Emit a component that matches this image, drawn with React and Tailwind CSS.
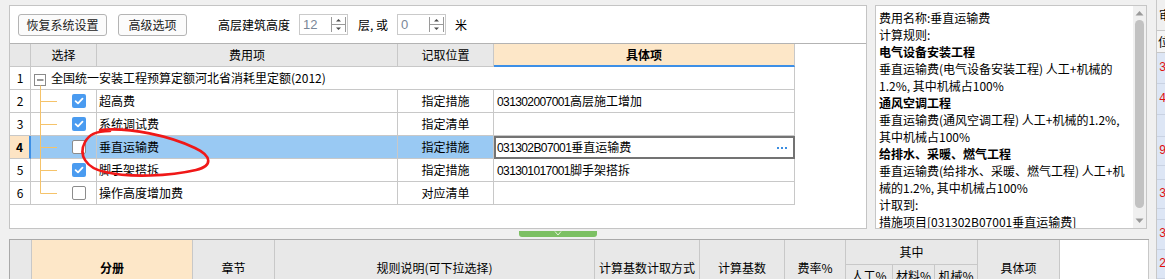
import React from "react";

function Check({ checked }) {
  if (checked) {
    return (
      <span className="w-[14px] h-[14px] rounded-[2px] bg-[#4a9bf0] flex items-center justify-center shrink-0">
        <svg width="10" height="10" viewBox="0 0 10 10">
          <path d="M1.6 5.2 L4 7.4 L8.5 2.7" stroke="#ffffff" strokeWidth="1.8" fill="none" strokeLinecap="round" strokeLinejoin="round" />
        </svg>
      </span>
    );
  }
  return <span className="block w-[14px] h-[14px] rounded-[2px] bg-white border border-[#8c8c8c] shrink-0" />;
}

function Spin({ value }) {
  return (
    <div className="w-[49px] h-[21px] border border-[#cacaca] bg-white flex items-center justify-between pl-[3px] pr-[1px]">
      <span className="text-[#7a8797] text-[13px] leading-none font-['Liberation_Sans',sans-serif]">{value}</span>
      <svg width="15" height="17" viewBox="0 0 15 17">
        <path d="M0.5 1 V16 M14.5 1 V16 M0.5 8.5 H14.5" stroke="#9a9a9a" strokeWidth="1" fill="none" />
        <path d="M5 5.5 L7.5 3 L10 5.5 Z" fill="#4a4a4a" />
        <path d="M5 11.5 L7.5 14 L10 11.5 Z" fill="#4a4a4a" />
      </svg>
    </div>
  );
}

function Connector({ last }) {
  return (
    <svg width="27" height="23" viewBox="0 0 27 23" className="shrink-0 block">
      <path d={last ? "M9.5 0 V11.5" : "M9.5 0 V23"} stroke="#f5c36a" strokeWidth="1" fill="none" />
      <path d="M9.5 11.5 H26" stroke="#f5c36a" strokeWidth="1" fill="none" />
    </svg>
  );
}

const rows = [
  { n: 2, checked: true, name: "超高费", loc: "指定措施", code: "031302007001", item: "高层施工增加" },
  { n: 3, checked: true, name: "系统调试费", loc: "指定清单" },
  { n: 4, checked: false, name: "垂直运输费", loc: "指定措施", code: "031302B07001", item: "垂直运输费", selected: true },
  { n: 5, checked: true, name: "脚手架搭拆", loc: "指定措施", code: "031301017001", item: "脚手架搭拆" },
  { n: 6, checked: false, name: "操作高度增加费", loc: "对应清单", last: true },
];

function Toolbar() {
  return (
    <div className="h-[38px] border-b border-[#b3b3b3] flex items-center pl-[8px] shrink-0">
      <button className="w-[89px] h-[22px] border border-[#b4b4b4] rounded-[3px] bg-[#fbfbfb] text-[12px] leading-none text-[#222]">恢复系统设置</button>
      <button className="ml-[11px] w-[69px] h-[22px] border border-[#b4b4b4] rounded-[3px] bg-[#fbfbfb] text-[12px] leading-none text-[#222]">高级选项</button>
      <span className="ml-[31px] text-[12px] leading-none">高层建筑高度</span>
      <div className="ml-[9px]"><Spin value="12" /></div>
      <span className="ml-[10px] text-[12px] leading-none">层, 或</span>
      <div className="ml-[9px]"><Spin value="0" /></div>
      <span className="ml-[9px] text-[12px] leading-none">米</span>
    </div>
  );
}

function MainTable() {
  const cell = "h-[23px] border-r border-b border-[#c8c8c8] flex items-center text-[12px] leading-none";
  return (
    <div className="grid grid-cols-[21px_66px_301px_96px_301px] w-fit">
      <div className={cell + " bg-[#e8e8e8]"} />
      <div className={cell + " bg-[#e8e8e8] justify-center"}>选择</div>
      <div className={cell + " bg-[#e8e8e8] justify-center"}>费用项</div>
      <div className={cell + " bg-[#e8e8e8] justify-center"}>记取位置</div>
      <div className="h-[23px] border-r border-b-2 border-r-[#c8c8c8] border-b-[#3d8fe6] bg-[#fde7c8] flex items-center justify-center text-[12px] leading-none font-bold">具体项</div>

      <div className={cell + " justify-center bg-white"}>1</div>
      <div className={cell + " col-span-4 bg-white pl-[3px]"}>
        <svg width="13" height="23" viewBox="0 0 13 23" className="shrink-0 block">
          <rect x="0.5" y="7.5" width="11" height="11" fill="#ffffff" stroke="#8a8a8a" />
          <path d="M3 13 H9.5" stroke="#333" strokeWidth="1" />
          <path d="M6.5 18.5 V23" stroke="#f5c36a" strokeWidth="1" />
        </svg>
        <span className="ml-[4px]">全国统一安装工程预算定额河北省消耗里定额(2012)</span>
      </div>

      {rows.map((r) => (
        <React.Fragment key={r.n}>
          {r.selected ? (
            <div className="h-[23px] border-b border-r-2 border-b-[#c8c8c8] border-r-[#3d8fe6] bg-[#fde4c4] flex items-center justify-center text-[12px] leading-none font-bold">{r.n}</div>
          ) : (
            <div className={cell + " justify-center bg-white"}>{r.n}</div>
          )}
          <div className={cell + (r.selected ? " bg-[#99c9f3]" : " bg-white")}>
            <Connector last={r.last} />
            <span className="ml-[14px] block"><Check checked={r.checked} /></span>
          </div>
          <div className={cell + " pl-[2px]" + (r.selected ? " bg-[#99c9f3]" : " bg-white")}>{r.name}</div>
          <div className={cell + " justify-center" + (r.selected ? " bg-[#99c9f3]" : " bg-white")}>{r.loc}</div>
          {r.selected ? (
            <div className="h-[23px] border-2 border-[#737373] bg-white flex items-center justify-between pl-[1px] pr-[6px] text-[12px] leading-none">
              <span>
                <span className="font-['Liberation_Sans',sans-serif] tracking-[-0.6px]">{r.code}</span>
                {r.item}
              </span>
              <span className="flex gap-[2px]">
                <span className="w-[2px] h-[2px] bg-[#3b8de0]" />
                <span className="w-[2px] h-[2px] bg-[#3b8de0]" />
                <span className="w-[2px] h-[2px] bg-[#3b8de0]" />
              </span>
            </div>
          ) : (
            <div className={cell + " pl-[3px] bg-white"}>
              {r.code ? (
                <span>
                  <span className="font-['Liberation_Sans',sans-serif] tracking-[-0.6px]">{r.code}</span>
                  {r.item}
                </span>
              ) : null}
            </div>
          )}
        </React.Fragment>
      ))}
    </div>
  );
}

function LeftPanel() {
  return (
    <div className="w-[858px] h-[224px] border border-[#c4c4c4] bg-white flex flex-col">
      <Toolbar />
      <div className="flex-1 bg-white">
        <MainTable />
      </div>
    </div>
  );
}

function RightPanel() {
  return (
    <div className="ml-[8px] w-[272px] h-[224px] border border-[#c6c6c6] bg-white flex">
      <div className="w-[257px] pl-[3px] pt-[3px] pr-[3px] text-[12px] leading-[17px] overflow-hidden">
        <p>费用名称:垂直运输费</p>
        <p>计算规则:</p>
        <p className="font-bold">电气设备安装工程</p>
        <p>垂直运输费(电气设备安装工程) 人工+机械的1.2%, 其中机械占100%</p>
        <p className="font-bold">通风空调工程</p>
        <p>垂直运输费(通风空调工程) 人工+机械的1.2%, 其中机械占100%</p>
        <p className="font-bold">给排水、采暖、燃气工程</p>
        <p>垂直运输费(给排水、采暖、燃气工程) 人工+机械的1.2%, 其中机械占100%</p>
        <p>计取到:</p>
        <p className="whitespace-nowrap">措施项目[031302B07001垂直运输费]</p>
      </div>
      <div className="w-[13px] bg-[#f0f0f0] flex flex-col items-center">
        <svg width="9" height="6" viewBox="0 0 9 6" className="mt-[4px]">
          <path d="M0.5 5.5 L4.5 1 L8.5 5.5 Z" fill="#9a9a9a" />
        </svg>
        <div className="mt-[4px] w-[9px] h-[188px] rounded-full bg-[#c2c2c2]" />
        <svg width="9" height="6" viewBox="0 0 9 6" className="mt-[10px]">
          <path d="M0.5 0.5 L4.5 5 L8.5 0.5 Z" fill="#9a9a9a" />
        </svg>
      </div>
    </div>
  );
}

function BottomTable() {
  const h = "border-r border-b border-[#c8c8c8] bg-[#e8e8e8] flex items-center justify-center text-[12px] leading-none row-span-2";
  return (
    <div className="pl-[9px]">
      <div className="grid grid-cols-[22px_161px_82px_320px_105px_85px_61px_47px_42px_43px_82px_89px] grid-rows-[25px_31px] border-t border-l border-[#a9a9a9] w-fit">
        <div className={h} />
        <div className="row-span-2 border-r border-b border-[#c8c8c8] bg-[#fde7c8] flex items-center justify-center text-[12px] leading-none font-bold">分册</div>
        <div className={h}>章节</div>
        <div className={h}>规则说明(可下拉选择)</div>
        <div className={h}>计算基数计取方式</div>
        <div className={h}>计算基数</div>
        <div className={h}>费率%</div>
        <div className="col-span-3 border-r border-b border-[#c8c8c8] bg-[#e8e8e8] flex items-center justify-center text-[12px] leading-none">其中</div>
        <div className={h}>具体项</div>
        <div className="row-span-2 border-r border-[#c8c8c8] bg-white" />
        <div className="border-r border-b border-[#c8c8c8] bg-[#e8e8e8] flex justify-center pt-[5px] text-[12px] leading-none">人工%</div>
        <div className="border-r border-b border-[#c8c8c8] bg-[#e8e8e8] flex justify-center pt-[5px] text-[12px] leading-none">材料%</div>
        <div className="border-r border-b border-[#c8c8c8] bg-[#e8e8e8] flex justify-center pt-[5px] text-[12px] leading-none">机械%</div>
      </div>
    </div>
  );
}

function Strip() {
  const row = "border-b border-[#c9d2e2] bg-[#dde6f5] text-[#e01010] text-[12px] leading-none flex items-center pl-[2px] whitespace-nowrap";
  return (
    <div className="w-[9px] h-[279px] overflow-hidden flex flex-col border-l border-[#c8c8c8] font-['Liberation_Mono',monospace]">
      <div className="h-[32px] bg-[#f0f0f0] border-b border-[#c8c8c8] flex items-center pl-[2px] text-[12px] leading-none font-['Noto_Sans_CJK_SC',sans-serif]">审</div>
      <div className="h-[22px] bg-[#f5f5f5] border-b border-[#c8c8c8] flex items-center pl-[1px] text-[12px] leading-none font-['Noto_Sans_CJK_SC',sans-serif]">位</div>
      <div className={row + " h-[31px]"}>3</div>
      <div className={row + " h-[32px]"}>4</div>
      <div className={row + " h-[22px]"} />
      <div className={row + " h-[30px]"}>9</div>
      <div className={row + " h-[14px]"} />
      <div className={row + " h-[30px]"}>38</div>
      <div className={row + " h-[11px]"} />
      <div className={row + " h-[30px]"}>31</div>
      <div className={row + " h-[30px]"}>2</div>
    </div>
  );
}

export default function App() {
  return (
    <div className="relative w-[1165px] h-[279px] overflow-hidden bg-[#f0f0f0] text-black flex font-['Noto_Sans_CJK_SC',sans-serif]">
      <div className="w-[1156px] h-[279px] flex flex-col shrink-0">
        <div className="h-[229px] flex pt-[5px] pl-[9px] shrink-0">
          <LeftPanel />
          <RightPanel />
        </div>
        <div className="h-[10px] pl-[519px] pt-[2px] shrink-0">
          <div className="w-[78px] h-[6px] bg-[#7cc063] rounded-b-[3px] flex justify-center">
            <svg width="8" height="5" viewBox="0 0 8 5">
              <path d="M1 0.5 L4 4 L7 0.5" stroke="#e6f4dc" strokeWidth="1" fill="none" />
            </svg>
          </div>
        </div>
        <BottomTable />
      </div>
      <Strip />
      <svg className="absolute left-0 top-0 pointer-events-none" width="1165" height="279" viewBox="0 0 1165 279">
        <path
          d="M100 130 C130 127, 170 136, 195 148 C212 156, 213 166, 196 170 C170 176, 130 178, 105 172 C86 168, 78 155, 85 142 C89 135, 95 131, 110 131"
          stroke="#f01818"
          strokeWidth="2.6"
          fill="none"
          strokeLinecap="round"
        />
      </svg>
    </div>
  );
}
